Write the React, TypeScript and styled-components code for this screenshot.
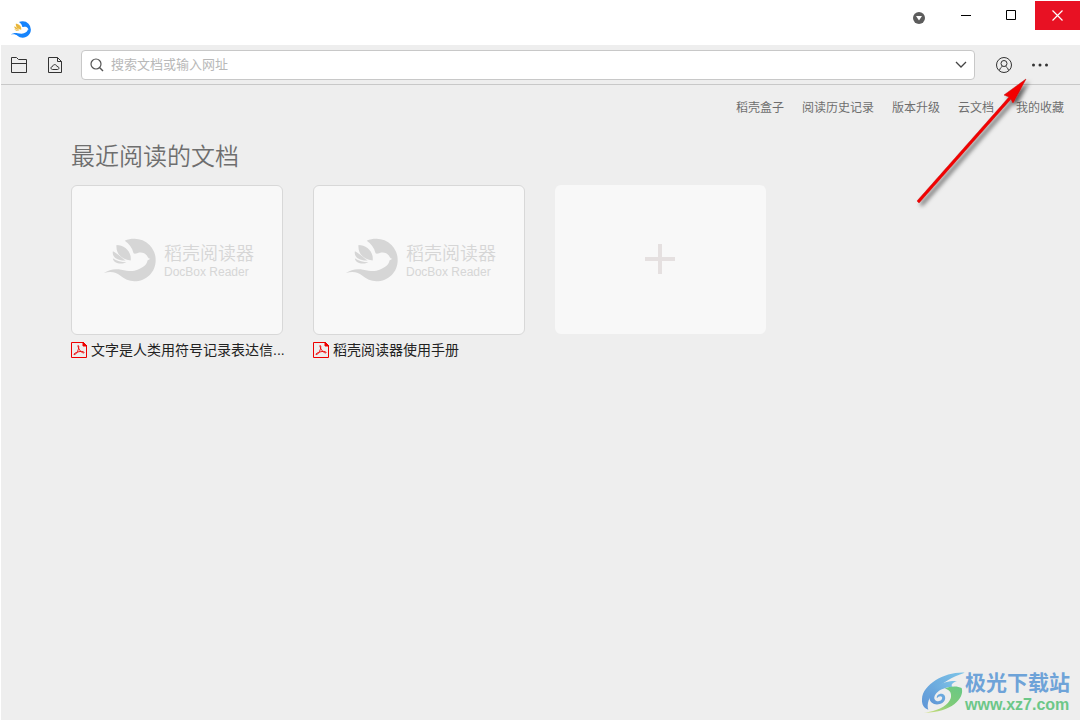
import React from "react";
import styled, { createGlobalStyle } from "styled-components";

const sans = `"Liberation Sans", "Noto Sans CJK SC", sans-serif`;

const GlobalStyle = createGlobalStyle`
  *, *::before, *::after { box-sizing: border-box; }
  body { margin: 0; background: #fff; font-family: ${sans}; }
  button, input { font: inherit; }
`;

const Window = styled.div`
  position: relative;
  display: flex;
  flex-direction: column;
  min-height: 100vh;
  padding: 1px;
  overflow: hidden;
  background: #fff;
`;

const TitleBar = styled.header`
  display: flex;
  justify-content: space-between;
  height: 44px;
`;

const AppMark = styled.div`
  padding: 20px 0 0 10px;
  svg { display: block; }
`;

const WindowControls = styled.div`
  display: flex;
`;

const ControlButton = styled.button<{ $danger?: boolean }>`
  display: grid;
  place-items: center;
  width: 45px;
  height: 29px;
  padding: 0;
  border: 0;
  color: ${(p) => (p.$danger ? "#fff" : "#000")};
  background: ${(p) => (p.$danger ? "#e81123" : "transparent")};
`;

const PlainControls = styled.div`
  display: flex;
  padding-right: 1px;
`;

const MenuButton = styled(ControlButton)`
  width: 50px;
  height: 34px;
`;

const Toolbar = styled.div`
  display: flex;
  align-items: center;
  height: 40px;
  padding: 0 22px 0 0;
  background: #eee;
  border-bottom: 1px solid #c8c8c8;
`;

const ToolButton = styled.button`
  display: grid;
  place-items: center;
  width: 36px;
  height: 36px;
  padding: 0;
  border: 0;
  color: #333;
  background: transparent;
`;

const SearchBox = styled.label`
  display: flex;
  flex: 1;
  align-items: center;
  gap: 7px;
  height: 30px;
  margin: 0 11px 0 8px;
  padding: 0 6px 0 8px;
  color: #555;
  background: #fff;
  border: 1px solid #c8c8c8;
  border-radius: 4px;
`;

const SearchInput = styled.input`
  flex: 1;
  min-width: 0;
  height: 24px;
  padding: 0;
  border: 0;
  outline: 0;
  background: transparent;
  font-size: 13px;
  &::placeholder { color: #b8b8b8; opacity: 1; }
`;

const ChevronButton = styled.button`
  display: grid;
  place-items: center;
  width: 14px;
  height: 24px;
  padding: 0;
  border: 0;
  color: #444;
  background: transparent;
`;

const Content = styled.main`
  flex: 1;
  background: #eee;
`;

const QuickLinks = styled.nav`
  display: flex;
  justify-content: flex-end;
  gap: 18px;
  padding: 13px 16px 0;
`;

const QuickLink = styled.a`
  min-width: 40px;
  color: #6e6e6e;
  font-size: 12px;
  line-height: 20px;
  text-decoration: none;
`;

const Recent = styled.section`
  padding: 23px 70px;
`;

const Heading = styled.h1`
  margin: 0 0 12px;
  color: #6e6e6e;
  font-size: 24px;
  font-weight: 350;
  line-height: 32px;
`;

const CardGrid = styled.div`
  display: flex;
  flex-wrap: wrap;
  gap: 30px;
`;

const DocLink = styled.a`
  display: block;
  width: 212px;
  color: #222;
  text-decoration: none;
`;

const Preview = styled.div`
  display: flex;
  align-items: center;
  gap: 8px;
  height: 150px;
  padding-left: 32px;
  color: #d6d6d6;
  background: #f8f8f8;
  border: 1px solid #d8d8d8;
  border-radius: 6px;
`;

const Brand = styled.div`
  padding-top: 4px;
  font-size: 18px;
  font-weight: 350;
  line-height: 20px;
  white-space: nowrap;
`;

const BrandLatin = styled.div`
  font-size: 12px;
  line-height: 16px;
  font-weight: 400;
`;

const FileName = styled.div`
  display: flex;
  align-items: center;
  gap: 4px;
  margin-top: 4px;
  font-size: 14px;
  line-height: 22px;
  white-space: nowrap;
  svg { flex: none; }
`;

const AddButton = styled.button`
  display: grid;
  place-items: center;
  width: 211px;
  height: 149px;
  padding: 0;
  border: 0;
  border-radius: 6px;
  background: #f8f8f8;
`;

const Pointer = styled.svg`
  position: absolute;
  top: 70px;
  right: 41px;
  pointer-events: none;
`;

const SiteBadge = styled.div`
  position: absolute;
  right: 11px;
  bottom: 6px;
  display: flex;
  align-items: center;
`;

const SiteName = styled.div`
  color: #6ea3d8;
  font-size: 21px;
  font-weight: 700;
  line-height: 24px;
`;

const SiteUrl = styled.div`
  color: #6cc788;
  font-size: 16px;
  font-weight: 700;
  line-height: 20px;
`;

const birdBody =
  "M63 7C72 3 82 1 92 1A64 64 0 0 1 157 66C157 102 129 130 92 130C76 130 62 123 51 114C37 103 22 99 0 105C14 95 33 91 52 95C74 99 88 101 102 95C120 88 131 79 132 67L141 62C134 61 134 57 131 53C125 44 113 41 103 44C96 46 91 49 89 43C86 29 77 17 63 7Z";
const birdWing =
  "M38 20C62 20 85 40 81 67C56 64 35 48 38 20ZM27 39C23 58 44 69 66 67C54 60 42 46 27 39ZM27 60C28 75 52 81 68 72C52 72 38 68 27 60Z";

const Bird = ({ width, height, body, wing }: { width: number; height: number; body: string; wing: string }) => (
  <svg width={width} height={height} viewBox="0 0 158 131" aria-hidden="true">
    <path fill={body} d={birdBody} />
    <path fill={wing} d={birdWing} />
  </svg>
);

const PdfIcon = () => (
  <svg width="16" height="16" viewBox="0 0 16 16" fill="none" stroke="#ee0000" aria-hidden="true">
    <path d="M.5.5H12L15.500 4V15.500H.5Z" />
    <path d="M12 0V4H16Z" fill="#ee0000" />
    <path d="M7 3.500C8.500 3.500 7.500 7.500 6.500 9.500S4 13 3 12.500 6 9.800 9 9.500 13.500 10 13 10.800 9 9.500 8 7 6.500 3.700 7 3.500Z" strokeWidth=".9" />
  </svg>
);

const Swirl = () => (
  <svg width="44" height="44" viewBox="9 6 132 132" aria-hidden="true">
    <defs>
      <linearGradient id="swirlBlue" x1="1" y1="0" x2="0" y2="1">
        <stop offset="0" stopColor="#7cc4e8" />
        <stop offset="1" stopColor="#5f95d6" />
      </linearGradient>
      <linearGradient id="swirlGreen" x1="1" y1="0" x2="0" y2="1">
        <stop offset="0" stopColor="#68c886" />
        <stop offset=".5" stopColor="#7fcb78" />
        <stop offset="1" stopColor="#d5e07c" />
      </linearGradient>
    </defs>
    <path fill="url(#swirlBlue)" d="M140 11C82 8 15 45 12 90C11 108 18 118 31 122C20 88 62 36 140 11Z" />
    <path fill="url(#swirlBlue)" d="M117 36C75 34 34 56 34 84C34 105 57 112 74 101C86 92 83 76 72 74C62 73 54 80 57 88C60 82 68 79 72 84C75 92 64 100 54 95C40 86 56 56 104 53C96 48 105 40 117 36Z" />
    <path fill="url(#swirlGreen)" d="M80 59C98 50 120 51 131 57C141 88 98 132 18 131C54 128 95 110 99 84C101 70 94 61 80 59Z" />
  </svg>
);

const links = ["稻壳盒子", "阅读历史记录", "版本升级", "云文档", "我的收藏"];
const documents = ["文字是人类用符号记录表达信...", "稻壳阅读器使用手册"];

export default function App() {
  return (
    <Window>
      <GlobalStyle />
      <TitleBar>
        <AppMark>
          <Bird width={20} height={17} body="#1684fc" wing="#e9b73c" />
        </AppMark>
        <WindowControls>
          <PlainControls>
            <MenuButton aria-label="菜单">
              <svg width="12" height="12" viewBox="0 0 12 12">
                <circle cx="6" cy="6" r="6" fill="#5c5c5c" />
                <path d="M3 4H9L6 8.500Z" fill="#fff" />
              </svg>
            </MenuButton>
            <ControlButton aria-label="最小化">
              <svg width="11" height="11" stroke="currentColor"><path d="M0 5.500H10" /></svg>
            </ControlButton>
            <ControlButton aria-label="最大化">
              <svg width="11" height="11" fill="none" stroke="currentColor"><path d="M.5.5H9.500V9.500H.5Z" /></svg>
            </ControlButton>
          </PlainControls>
          <ControlButton $danger aria-label="关闭">
            <svg width="11" height="11" stroke="currentColor" strokeWidth="1.200"><path d="M.5.5L10.500 10.500M10.500.5L.5 10.500" /></svg>
          </ControlButton>
        </WindowControls>
      </TitleBar>
      <Toolbar>
        <ToolButton aria-label="打开文件">
          <svg width="16" height="16" fill="none" stroke="currentColor">
            <path d="M.5 15V.5H5.500L7.500 2.500H15.500V15.500H.5V6.500H15.500" />
          </svg>
        </ToolButton>
        <ToolButton aria-label="云文档">
          <svg width="14" height="16" fill="none" stroke="currentColor">
            <path d="M.5 .5H9.500L13.500 4.500V15.500H.5ZM9.500 .5V4.500H13.500" />
            <path d="M4.500 12.500C2.500 12.500 2.500 9.500 4.500 9.500C5 7 8.500 7 9 9.500C11.500 9.500 11.500 12.500 9.500 12.500Z" />
          </svg>
        </ToolButton>
        <SearchBox>
          <svg width="14" height="14" fill="none" stroke="currentColor" aria-hidden="true">
            <circle cx="6" cy="6" r="5" strokeWidth="1.200" /><path d="M9.500 9.500L13 13" strokeWidth="1.400" />
          </svg>
          <SearchInput placeholder="搜索文档或输入网址" aria-label="搜索" />
          <ChevronButton aria-label="展开">
            <svg width="12" height="8" fill="none" stroke="currentColor" strokeWidth="1.300"><path d="M1 1L6 6L11 1" /></svg>
          </ChevronButton>
        </SearchBox>
        <ToolButton aria-label="账户">
          <svg width="16" height="16" fill="none" stroke="currentColor">
            <circle cx="8" cy="8" r="7.500" /><circle cx="8" cy="6.500" r="3" />
            <path d="M3.500 13.500C4 11 5.500 9.800 6.500 9.300M12.500 13.500C12 11 10.500 9.800 9.500 9.300" />
          </svg>
        </ToolButton>
        <ToolButton aria-label="更多">
          <svg width="16" height="4" fill="currentColor">
            <circle cx="1.500" cy="2" r="1.500" /><circle cx="8" cy="2" r="1.500" /><circle cx="14.500" cy="2" r="1.500" />
          </svg>
        </ToolButton>
      </Toolbar>
      <Content>
        <QuickLinks>
          {links.map((text) => <QuickLink href="#" key={text}>{text}</QuickLink>)}
        </QuickLinks>
        <Recent>
          <Heading>最近阅读的文档</Heading>
          <CardGrid>
            {documents.map((name) => (
              <DocLink href="#" key={name}>
                <Preview>
                  <Bird width={52} height={44} body="#d6d6d6" wing="#d6d6d6" />
                  <Brand>稻壳阅读器<BrandLatin>DocBox Reader</BrandLatin></Brand>
                </Preview>
                <FileName><PdfIcon />{name}</FileName>
              </DocLink>
            ))}
            <AddButton aria-label="添加文档">
              <svg width="31" height="31" stroke="#e5e0e0" strokeWidth="4"><path d="M0 15H30M15 0V30" /></svg>
            </AddButton>
          </CardGrid>
        </Recent>
      </Content>
      <Pointer width="130" height="140" viewBox="910 70 130 140" aria-hidden="true">
        <defs>
          <filter id="arrowShadow" x="-20%" y="-20%" width="150%" height="150%">
            <feDropShadow dx="3" dy="3" stdDeviation="2" floodColor="#000" floodOpacity=".6" />
          </filter>
        </defs>
        <path d="M917 201L1009 97L1004 95L1026 79L1013 103L1011 99L919 203Z" fill="#f40000" stroke="#c01010" strokeWidth=".5" filter="url(#arrowShadow)" />
      </Pointer>
      <SiteBadge>
        <Swirl />
        <div>
          <SiteName>极光下载站</SiteName>
          <SiteUrl>www.xz7.com</SiteUrl>
        </div>
      </SiteBadge>
    </Window>
  );
}
